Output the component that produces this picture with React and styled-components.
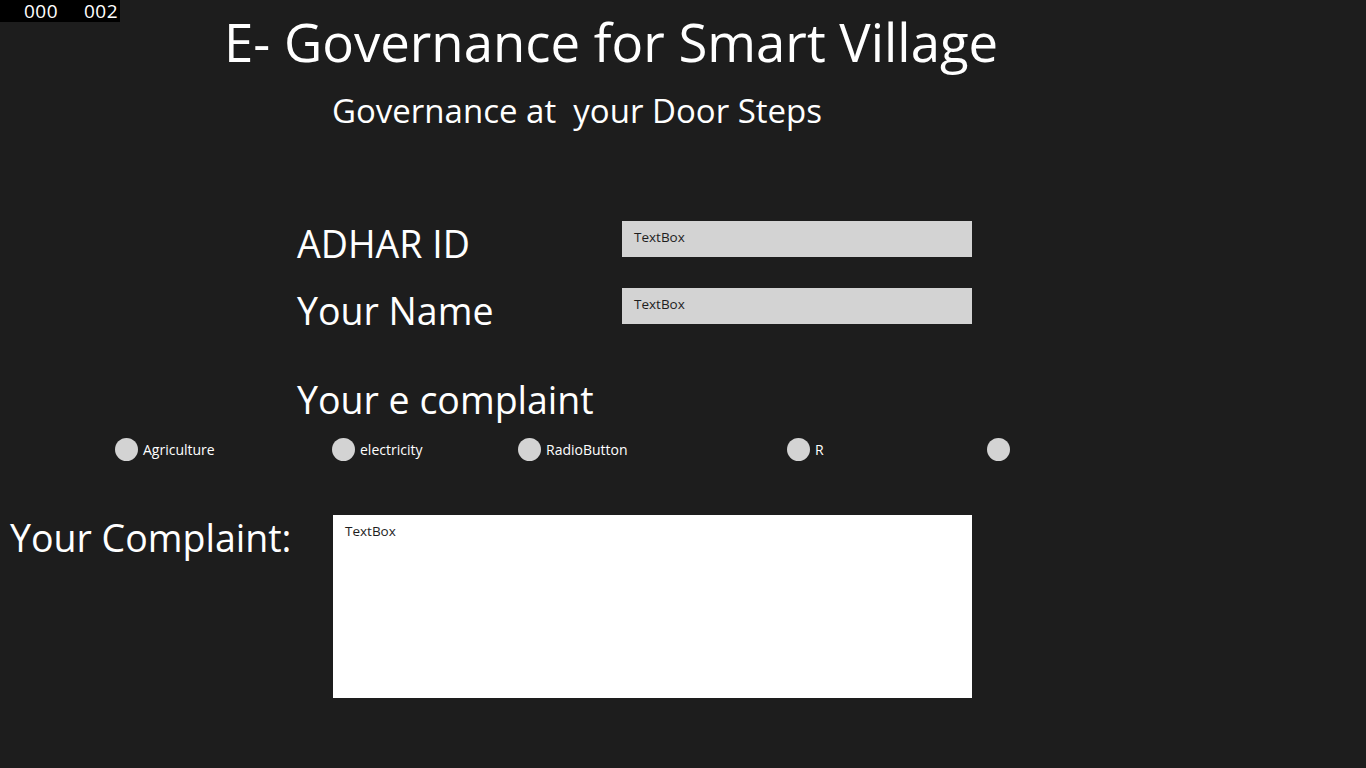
import React from 'react'
import styled, { createGlobalStyle } from 'styled-components'

const GlobalStyle = createGlobalStyle`
  html, body {
    margin: 0;
    padding: 0;
    background: #1d1d1d;
  }
  body {
    font-family: "Open Sans", "Liberation Sans", sans-serif;
    color: #ffffff;
  }
`

const Page = styled.div`
  width: 1366px;
  height: 768px;
  background: #1d1d1d;
  overflow: hidden;
`

const Counter = styled.div`
  display: flex;
  align-items: center;
  width: 120px;
  height: 22px;
  background: #000;
  color: #fff;
`

const Digits = styled.span`
  width: 60px;
  padding-right: 2px;
  box-sizing: border-box;
  text-align: right;
  font-size: 19px;
  line-height: 20px;
  letter-spacing: 0.5px;
`

const Header = styled.header`
  display: flex;
  flex-direction: column;
`

const Title = styled.h1`
  margin: 0;
  padding-left: 224px;
  font-size: 52.7px;
  font-weight: 400;
  line-height: 39px;
`

const Subtitle = styled.h2`
  margin: 30px 0 0;
  padding-left: 332px;
  font-size: 33px;
  font-weight: 400;
  line-height: 40px;
  white-space: pre;
`

const Fields = styled.div`
  display: grid;
  grid-template-columns: 325px 350px;
  row-gap: 21px;
  margin: 90px 0 0 297px;
  align-items: start;
`

const Label = styled.div`
  font-size: 37.5px;
  line-height: 46px;
  white-space: nowrap;
`

const TextBox = styled.div`
  height: 36px;
  background: #d3d3d3;
  color: #1e1e1e;
  font-size: 13.5px;
  padding: 7px 12px;
  box-sizing: border-box;
`

const Heading = styled(Label)`
  margin: 43px 0 0 297px;
`

const RadioRow = styled.div`
  display: grid;
  grid-template-columns: 217px 186px 269px 200px auto;
  margin: 14px 0 0 115px;
`

const Radio = styled.label`
  display: flex;
  align-items: center;
  gap: 5px;
  font-size: 14px;
  color: #fff;
  height: 24px;
  &::before {
    content: '';
    width: 23px;
    height: 23px;
    border-radius: 50%;
    background: #d3d3d3;
    flex: none;
  }
`

const ComplaintRow = styled.div`
  display: flex;
  align-items: flex-start;
  margin-top: 54px;
  padding-left: 10px;
`

const ComplaintLabel = styled(Label)`
  width: 323px;
`

const ComplaintBox = styled.div`
  width: 639px;
  height: 183px;
  background: #fff;
  color: #1e1e1e;
  font-size: 13.5px;
  padding: 7px 12px;
  box-sizing: border-box;
`

export default function App() {
  return (
    <Page>
      <GlobalStyle />
      <Counter>
        <Digits>000</Digits>
        <Digits>002</Digits>
      </Counter>
      <Header>
        <Title>E- Governance for Smart Village</Title>
        <Subtitle>Governance at  your Door Steps</Subtitle>
      </Header>
      <Fields>
        <Label>ADHAR ID</Label>
        <TextBox>TextBox</TextBox>
        <Label>Your Name</Label>
        <TextBox>TextBox</TextBox>
      </Fields>
      <Heading>Your e complaint</Heading>
      <RadioRow>
        <Radio>Agriculture</Radio>
        <Radio>electricity</Radio>
        <Radio>RadioButton</Radio>
        <Radio>R</Radio>
        <Radio />
      </RadioRow>
      <ComplaintRow>
        <ComplaintLabel>Your Complaint:</ComplaintLabel>
        <ComplaintBox>TextBox</ComplaintBox>
      </ComplaintRow>
    </Page>
  )
}
